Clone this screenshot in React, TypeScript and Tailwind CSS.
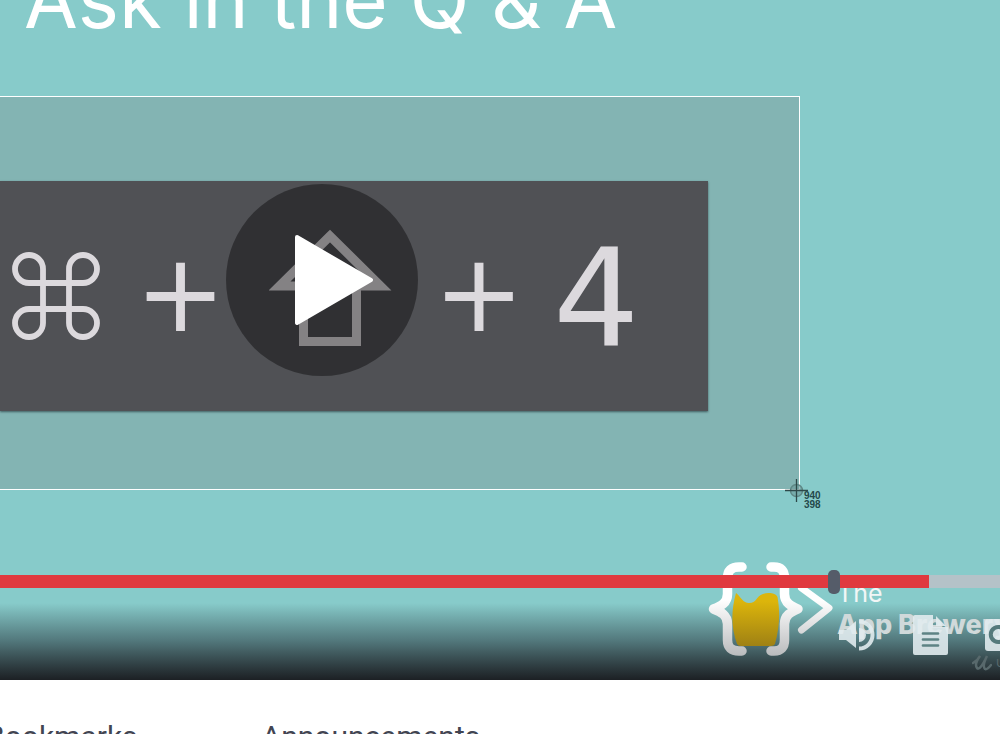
import { ReactNode } from "react";

const symbol = "text-[#dcd9dd]";

function CommandIcon() {
  return (
    <svg aria-label="Command" className="w-[88px] shrink-0" viewBox="0 0 88 88" fill="none" stroke="#dcd9dd" strokeWidth="5.8">
      <path d="M31 31V17A14 14 0 1 0 17 31H71A14 14 0 1 0 57 17V71A14 14 0 1 0 71 57H17A14 14 0 1 0 31 71V31Z" />
    </svg>
  );
}

function ShiftIcon() {
  return (
    <svg aria-label="Shift" className="w-[124px] shrink-0" viewBox="0 0 124 134" fill="none" stroke="#dcd9dd" strokeWidth="9">
      <path d="M61 7L10.500 57H34.500V112.500H87.500V57H111.500Z" />
    </svg>
  );
}

function BreweryLogo() {
  return (
    <svg aria-hidden="true" className="w-[130px] shrink-0" viewBox="0 0 130 100" fill="none">
      <defs>
        <linearGradient id="foam" gradientUnits="userSpaceOnUse" x1="0" y1="0" x2="0" y2="100">
          <stop offset="0.400" stopColor="#ffffff" />
          <stop offset="1" stopColor="#b4b6b8" />
        </linearGradient>
        <linearGradient id="beer" gradientUnits="userSpaceOnUse" x1="0" y1="30" x2="0" y2="86">
          <stop offset="0.200" stopColor="#dcb50b" />
          <stop offset="1" stopColor="#9f8114" />
        </linearGradient>
      </defs>
      <g stroke="url(#foam)" strokeWidth="9.500" strokeLinecap="round" strokeLinejoin="round">
        <path d="M37 7H34Q22.500 7 22.500 18V34C22.500 43 16 46 8.500 49C16 52 22.500 55 22.500 64V80Q22.500 91 34 91H37" />
        <path d="M66 7H69Q79.500 7 79.500 18V34C79.500 43 86 46 93 49C86 52 79.500 55 79.500 64V80Q79.500 91 69 91H66" />
        <path strokeWidth="7" d="M96.500 28L124 48L96.500 70" />
      </g>
      <path d="M31 33C36 37 38 43 44 43C52 43 51 36 58 34C63 32 71 33 72.500 37C75 51 75 66 70 84Q69 86 66 86H36Q33 86 32 84C26 67 26 51 31 33Z" fill="url(#beer)" />
    </svg>
  );
}

function Crosshair() {
  return (
    <svg aria-hidden="true" className="w-[23px] shrink-0" viewBox="0 0 23 23" fill="none" stroke="#2d4949">
      <circle cx="11.500" cy="11.500" r="6" fill="#6d9998" fillOpacity="0.6" stroke="#5f8886" strokeWidth="1.500" />
      <path d="M11.500 0V23M0 11.500H23" strokeWidth="1.300" />
    </svg>
  );
}

function ControlButton({ label, children }: { label: string; children: ReactNode }) {
  return (
    <button type="button" aria-label={label} className="flex h-10 w-10 shrink-0 items-center justify-center text-[#e1ebee]/90">
      {children}
    </button>
  );
}

export default function App() {
  return (
    <main className="h-screen overflow-hidden bg-white">
      <section aria-label="Lecture video" className="relative overflow-hidden bg-[#87cbca]">
        <div aria-hidden="true" className="absolute inset-x-0 bottom-0 h-24 bg-linear-to-b from-[#87cbca] from-20% via-[#51767a] via-60% to-[#1c2024]" />

        <div className="relative flex h-24 items-end pb-15 pl-6">
          <h1 className="font-['Inter',sans-serif] text-[78px] leading-[72px] whitespace-nowrap text-white">Ask in the Q &amp; A</h1>
        </div>

        <div className="relative w-4/5 border-y border-r border-white bg-[#83b4b3] pt-[84px] pr-[91px] pb-[78px]">
          <div className="flex h-[230px] items-center bg-[#505155] pl-3 shadow-[0_1px_2px_#3f5d60]">
            <CommandIcon />
            <span className={`${symbol} w-[169px] pr-2 pb-1 text-center font-['DejaVu_Sans',sans-serif] text-[108px] leading-none`}>+</span>
            <ShiftIcon />
            <span className={`${symbol} w-[160px] pb-1 pl-3 text-center font-['DejaVu_Sans',sans-serif] text-[108px] leading-none`}>+</span>
            <span className={`${symbol} pt-1 font-['DejaVu_Sans',sans-serif] text-[136px] leading-none`}>4</span>
          </div>
          <div className="absolute -right-[42px] -bottom-5 flex w-14 items-start">
            <Crosshair />
            <p className="-ml-1 pt-3 font-['Liberation_Sans',sans-serif] text-[10px] leading-[9px] font-bold text-[#24494a]">
              940
              <br />
              398
            </p>
          </div>
        </div>

        <div className="relative flex h-[190px] items-start justify-end overflow-hidden pt-[70px]">
          <div className="flex w-[295px] items-start">
            <BreweryLogo />
            <p className="pt-[18px] pl-[2px] font-['Inter',sans-serif] text-[25px] leading-[31px] whitespace-nowrap text-[#f2f6f6]">
              The
              <br />
              <b className="text-[27px] font-extrabold text-[#d0d9da]">App Brewery</b>
            </p>
          </div>
          <div className="absolute right-0 bottom-2 flex w-7 items-center gap-1 text-[#58696c]">
            <svg aria-hidden="true" className="w-5 shrink-0" viewBox="0 0 20 18" fill="none" stroke="currentColor" strokeWidth="2.500" strokeLinecap="round">
              <path d="M1 9Q6 6 8 2Q2 10 5 14Q8 17 15 2Q10 12 13 15Q15 16 19 11" />
            </svg>
            <span className="font-['Lato',sans-serif] text-[12px] leading-none">Udemy</span>
          </div>
        </div>

        <button type="button" aria-label="Play" className="absolute top-[184px] left-[226px] flex h-48 w-48 items-center justify-center rounded-full bg-black/40">
          <svg aria-hidden="true" className="ml-6 w-20" viewBox="0 0 80 92">
            <path d="M3 3L77 46L3 89Z" fill="#fff" stroke="#fff" strokeWidth="4" strokeLinejoin="round" />
          </svg>
        </button>

        <div className="absolute inset-x-0 bottom-0 h-[110px]">
          <div role="slider" aria-label="Seek" aria-valuemin={0} aria-valuemax={100} aria-valuenow={83} tabIndex={0} className="relative mt-[5px] flex h-[13px] bg-[#b4c2c8]">
            <div className="w-[92.9%] bg-[#e0393f]" />
            <span className="absolute -top-[5px] left-[82.8%] h-6 w-3 rounded-[5px] bg-[#555c69]" />
          </div>
          <div className="flex justify-end overflow-hidden pt-[27px]">
            <div className="flex w-[163px] items-center gap-[33px]">
              <ControlButton label="Volume">
                <svg aria-hidden="true" className="w-9" viewBox="0 0 36 32" fill="currentColor">
                  <path d="M0 11H7L17 2V29L7 21H0ZM20 9A7 7 0 0 1 20 23Z" />
                  <path d="M20 2.500A13.500 13.500 0 0 1 20 29.500" fill="none" stroke="currentColor" strokeWidth="4" />
                </svg>
              </ControlButton>
              <ControlButton label="Transcript">
                <svg aria-hidden="true" className="w-[35px]" viewBox="0 0 35 40">
                  <path d="M2 0H20V12H35V38Q35 40 33 40H2Q0 40 0 38V2Q0 0 2 0ZM23 1L33 11H23Z" fill="currentColor" />
                  <path d="M10 18.500H25M10 24.500H25M10 30.500H25" stroke="#5d8384" strokeWidth="2.700" strokeLinecap="round" />
                </svg>
              </ControlButton>
              <ControlButton label="Captions">
                <svg aria-hidden="true" className="w-9" viewBox="0 0 36 32">
                  <rect width="36" height="32" rx="3" fill="currentColor" />
                  <path d="M17 9A7.500 7.500 0 1 0 17 22" fill="none" stroke="#557a7c" strokeWidth="4" />
                </svg>
              </ControlButton>
            </div>
          </div>
        </div>
      </section>

      <nav aria-label="Course content" className="flex gap-[124px] pt-[39px] font-['Roboto',sans-serif] text-[30px] leading-9 text-[#424552]">
        <a href="#bookmarks" className="-ml-[14px]">Bookmarks</a>
        <a href="#announcements">Announcements</a>
      </nav>
    </main>
  );
}
